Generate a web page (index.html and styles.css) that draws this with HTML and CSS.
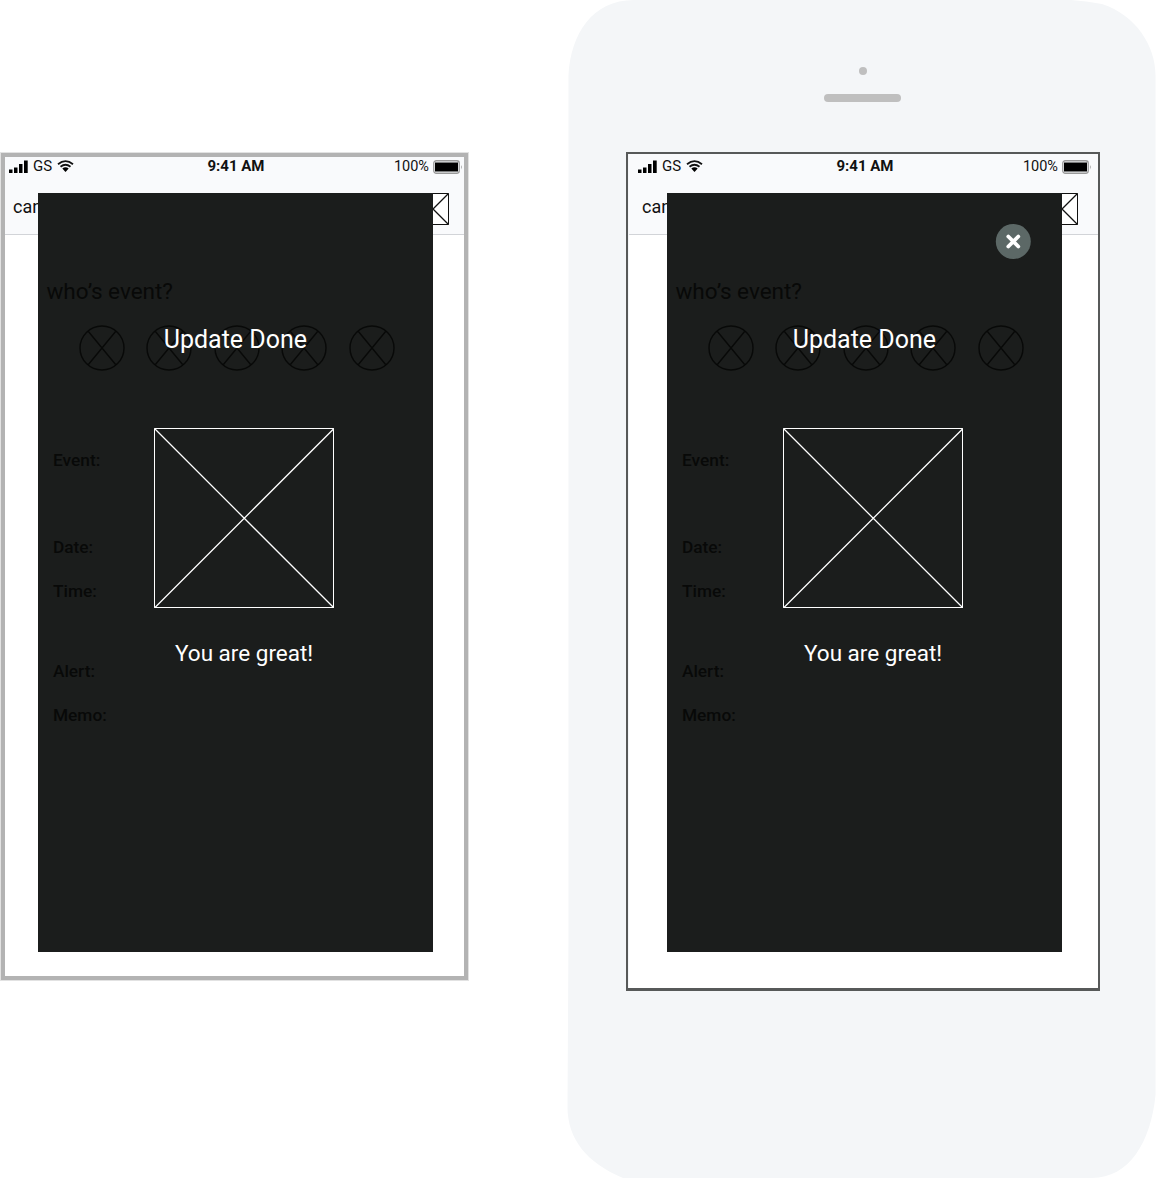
FILE: index.html
```html
<!DOCTYPE html>
<html lang="en">
<head>
<meta charset="utf-8">
<title>Update Done</title>
<link rel="stylesheet" href="styles.css">
</head>
<body>
<svg class="symbols" width="0" height="0" aria-hidden="true">
  <symbol id="signal" viewBox="0 0 19 13"><path d="M0 9.500h3.500V13H0zM5 7.500h3.500V13H5zM10 4h3.500v9H10zM15 .5h3.700V13H15z"/></symbol>
  <symbol id="wifi" viewBox="0 0 17 12"><path d="M1 4.200Q8.500-2 16 4.200M3.500 6.800Q8.500 2.700 13.500 6.800" fill="none" stroke="currentColor" stroke-width="1.800"/><path d="M5.300 8.500Q8.500 6 11.700 8.500L8.500 12z"/></symbol>
  <symbol id="battery" viewBox="0 0 31 14"><rect x=".75" y=".75" width="25.500" height="12.500" rx="2.500" fill="none" stroke="#999" stroke-width="1.300"/><rect x="2" y="2.500" width="23" height="9"/><path d="M28.200 5v4.500q1.600-2.200 0-4.500" fill="#888"/></symbol>
  <symbol id="face" viewBox="0 0 46 46"><circle cx="23" cy="23" r="22"/><path d="M9 6l28 34M37 6L9 40"/></symbol>
  <symbol id="picture" viewBox="0 0 180 180"><path d="M.5.5h179v179H.5z"/><path d="M.5.5l179.500 179.500M180 .5L.5 180" stroke-width="1.300"/></symbol>
  <symbol id="thumb" viewBox="0 0 32 32"><path d="M.5.5h31v31H.5z"/><path d="M.5.5l31 31M31.500.5l-31 31" stroke-width="1.300"/></symbol>
</svg>

<main class="stage">
  <section class="screen screen-plain">
    <header class="top">
      <div class="status">
        <div class="carrier"><svg class="signal"><use href="#signal"/></svg><span>GS</span><svg class="wifi"><use href="#wifi"/></svg></div>
        <time class="clock">9:41 AM</time>
        <div class="power"><span>100%</span><svg class="battery"><use href="#battery"/></svg></div>
      </div>
      <nav class="nav"><span>can</span><svg class="thumb"><use href="#thumb"/></svg></nav>
    </header>
    <article class="card">
      <div class="form">
        <h2 class="question">who’s event?</h2>
        <div class="faces"><svg><use href="#face"/></svg><svg><use href="#face"/></svg><svg><use href="#face"/></svg><svg><use href="#face"/></svg><svg><use href="#face"/></svg></div>
        <div class="fields"><b>Event:</b><b>Date:</b><b>Time:</b><b>Alert:</b><b>Memo:</b></div>
      </div>
      <div class="message">
        <h1 class="title">Update Done</h1>
        <svg class="picture"><use href="#picture"/></svg>
        <p class="praise">You are great!</p>
      </div>
    </article>
  </section>

  <section class="phone">
    <svg class="shell" viewBox="0 0 589 1178"><path d="M67 0H504Q519 1 535 4C569 15 588.500 46 588.500 75V1095C584 1142 562 1178 525 1178H56C20 1163 .5 1139 .5 1107L1.500 930V75C4 34 25 0 67 0z"/></svg>
    <div class="camera"></div>
    <div class="speaker"></div>
    <div class="screen screen-phone">
      <header class="top">
        <div class="status">
          <div class="carrier"><svg class="signal"><use href="#signal"/></svg><span>GS</span><svg class="wifi"><use href="#wifi"/></svg></div>
          <time class="clock">9:41 AM</time>
          <div class="power"><span>100%</span><svg class="battery"><use href="#battery"/></svg></div>
        </div>
        <nav class="nav"><span>can</span><svg class="thumb"><use href="#thumb"/></svg></nav>
      </header>
      <article class="card">
        <div class="form">
          <h2 class="question">who’s event?</h2>
          <div class="faces"><svg><use href="#face"/></svg><svg><use href="#face"/></svg><svg><use href="#face"/></svg><svg><use href="#face"/></svg><svg><use href="#face"/></svg></div>
          <div class="fields"><b>Event:</b><b>Date:</b><b>Time:</b><b>Alert:</b><b>Memo:</b></div>
        </div>
        <div class="message">
          <h1 class="title">Update Done</h1>
          <svg class="picture"><use href="#picture"/></svg>
          <p class="praise">You are great!</p>
        </div>
        <svg class="close" viewBox="0 0 36 36"><circle cx="18.300" cy="18.500" r="17.500" fill="#5c6866"/><path d="M13.300 13.500l10 10M23.300 13.500l-10 10" stroke="#fff" stroke-width="3.800" stroke-linecap="round"/></svg>
      </article>
    </div>
  </section>
</main>
</body>
</html>
```
FILE: styles.css
```css
* { box-sizing: border-box; }
body { margin: 0; background: #fff; color: #111; font-family: Roboto, sans-serif; }
h1, h2, p { margin: 0; font-weight: 400; white-space: nowrap; }
svg { display: block; flex: none; }
.symbols { position: absolute; }

.stage { display: flex; align-items: flex-start; width: 1156px; height: 1178px; overflow: hidden; }

.screen { position: relative; width: 469px; background: #fff; }
.screen::after { content: ""; position: absolute; pointer-events: none; }
.screen-plain { height: 825px; margin-top: 154px; margin-right: 98px; }
.screen-plain::after { inset: -1px 1px -1px 1px; border: 4px solid #b3b3b3; box-shadow: 0 0 0 1px #e2e2e2; }
.screen-phone { height: 834px; margin: 52px 0 0 62px; }
.screen-phone::after { inset: -2px -2px -3px -3px; border: 2px solid #575959; border-bottom-width: 3px; }

.phone { position: relative; width: 589px; height: 1178px; }
.shell { position: absolute; inset: 0; width: 589px; height: 1178px; fill: #f4f6f8; }
.camera { position: relative; width: 8px; height: 8px; margin: 67px 0 0 292px; border-radius: 50%; background: #bfbfbf; }
.speaker { position: relative; width: 77px; height: 8px; margin: 19px 0 0 256.5px; border-radius: 4px; background: #bfbfbf; }

.top { height: 81px; background: #f9fafc; border-bottom: 1px solid #d2d4d8; }
.status { display: grid; grid-template-columns: 1fr auto 1fr; align-items: start; height: 26px; padding: 0 5px 0 9px; font-size: 15px; line-height: 24px; }
.carrier, .power { display: flex; align-items: center; }
.carrier { gap: 5px; }
.signal { width: 19px; height: 13px; }
.wifi { width: 17px; height: 12px; }
.clock { font-weight: 700; margin-left: -1px; }
.power { justify-content: flex-end; gap: 4px; font-size: 14.5px; line-height: 26px; }
.battery { width: 31px; height: 14px; }
.nav { display: flex; justify-content: space-between; padding: 13px 20px 0 13px; font-size: 18px; line-height: 28px; }
.thumb { width: 32px; height: 32px; fill: #fff; stroke: #111; }

.card { position: relative; display: grid; width: 395px; height: 759px; margin: -42px 0 0 38px; background: #1b1d1c; }
.form, .message { grid-area: 1 / 1; min-width: 0; }
.form { color: #080908; }
.question { padding: 84px 0 0 8.4px; font-size: 22.5px; line-height: 28px; }
.faces { display: flex; gap: 21.5px; margin: 20px 0 0 40.5px; }
.faces svg { width: 46px; height: 46px; fill: none; stroke: #080908; stroke-width: 1.4; }
.fields { display: grid; grid-template-rows: 87px 44px 80px 44px 24px; margin: 77px 0 0 15px; font-size: 17.3px; line-height: 24px; }
.fields b { font-weight: 500; }

.message { position: relative; display: flex; flex-direction: column; color: #fff; }
.title { margin-top: 131px; padding-left: 125.7px; font-size: 25px; line-height: 32px; }
.picture { width: 180px; height: 180px; margin: 72px 0 0 116px; fill: none; stroke: #fff; }
.praise { margin-top: 31px; padding-left: 137px; font-size: 22.5px; line-height: 28px; }
.close { position: absolute; top: 30px; right: 31px; width: 36px; height: 36px; }
```
